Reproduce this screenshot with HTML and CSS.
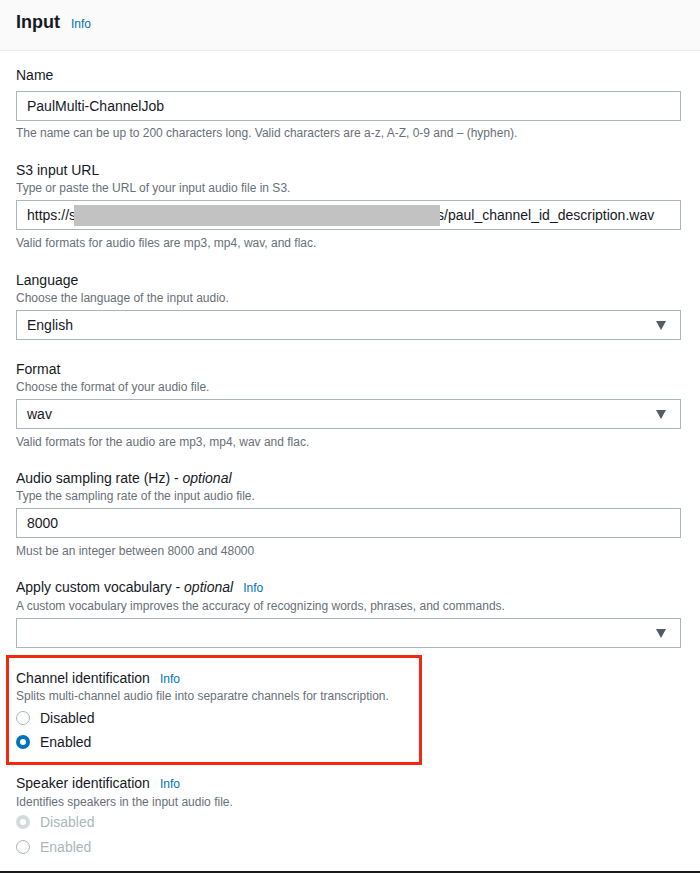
FILE: index.html
```html
<!DOCTYPE html>
<html lang="en">
<head>
<meta charset="utf-8">
<title>Input</title>
<link rel="stylesheet" href="styles.css">
</head>
<body>
<div class="page">
  <header class="header">
    <h1 class="title">Input</h1>
    <a class="info info--header">Info</a>
  </header>
  <main class="form">
    <div class="field field--plain">
      <div class="label">Name</div>
      <div class="control input">PaulMulti-ChannelJob</div>
      <div class="hint hint--first">The name can be up to 200 characters long. Valid characters are a-z, A-Z, 0-9 and – (hyphen).</div>
    </div>

    <div class="field">
      <div class="label">S3 input URL</div>
      <div class="desc">Type or paste the URL of your input audio file in S3.</div>
      <div class="control input">https://s<span class="redact"></span>s/paul_channel_id_description.wav</div>
      <div class="hint">Valid formats for audio files are mp3, mp4, wav, and flac.</div>
    </div>

    <div class="field">
      <div class="label">Language</div>
      <div class="desc">Choose the language of the input audio.</div>
      <div class="control input select"><span>English</span><span class="caret"></span></div>
    </div>

    <div class="field">
      <div class="label">Format</div>
      <div class="desc">Choose the format of your audio file.</div>
      <div class="control input select"><span>wav</span><span class="caret"></span></div>
      <div class="hint">Valid formats for the audio are mp3, mp4, wav and flac.</div>
    </div>

    <div class="field field--audio">
      <div class="label">Audio sampling rate (Hz) - <em>optional</em></div>
      <div class="desc">Type the sampling rate of the input audio file.</div>
      <div class="control input">8000</div>
      <div class="hint">Must be an integer between 8000 and 48000</div>
    </div>

    <div class="field field--vocab">
      <div class="label">Apply custom vocabulary - <em>optional</em><a class="info">Info</a></div>
      <div class="desc">A custom vocabulary improves the accuracy of recognizing words, phrases, and commands.</div>
      <div class="control input select"><span></span><span class="caret"></span></div>
    </div>

    <div class="field field--annotated">
      <div class="label">Channel identification<a class="info">Info</a></div>
      <div class="desc desc--tight">Splits multi-channel audio file into separatre channels for transcription.</div>
      <div class="radios">
        <div class="radio"><span class="dot"></span>Disabled</div>
        <div class="radio"><span class="dot dot--on"></span>Enabled</div>
      </div>
    </div>

    <div class="field field--speaker">
      <div class="label">Speaker identification<a class="info">Info</a></div>
      <div class="desc">Identifies speakers in the input audio file.</div>
      <div class="radios radios--disabled">
        <div class="radio radio--wide"><span class="dot dot--off-on"></span>Disabled</div>
        <div class="radio radio--wide"><span class="dot dot--off"></span>Enabled</div>
      </div>
    </div>
  </main>
</div>
</body>
</html>
```

FILE: styles.css
```css
html, body {
  margin: 0;
  padding: 0;
  background: #ffffff;
}

body {
  font-family: "Liberation Sans", Arial, sans-serif;
  color: #16191f;
}

.page {
  height: 873px;
  box-sizing: border-box;
  border-bottom: 2px solid #1b1b1b;
  overflow: hidden;
}

.header {
  height: 51px;
  box-sizing: border-box;
  padding: 11px 16px 0;
  background: #fafafa;
  border-bottom: 1px solid #eaeded;
  display: flex;
  align-items: baseline;
  gap: 11px;
}

.title {
  margin: 0;
  font-size: 18px;
  line-height: 22px;
  font-weight: 700;
  color: #16191f;
}

.info {
  color: #0073bb;
  font-size: 12px;
  margin-left: 10px;
  font-style: normal;
}

.info--header {
  margin-left: 0;
}

.form {
  padding: 15px 19px 0 16px;
  display: flex;
  flex-direction: column;
  gap: 20px;
}

.field {
  display: flex;
  flex-direction: column;
}

.field--audio {
  margin-top: -1px;
}

.field--vocab {
  margin-top: -1px;
}

.label {
  font-size: 14px;
  line-height: 18px;
  color: #16191f;
}

.label em {
  font-style: italic;
}

.desc {
  font-size: 12px;
  line-height: 18px;
  color: #687078;
}

.desc--tight {
  line-height: 16px;
}

.control {
  margin-top: 3px;
}

.field--plain .control {
  margin-top: 7px;
}

.input {
  height: 30px;
  box-sizing: border-box;
  border: 1px solid #aab7b8;
  padding: 0 10px;
  display: flex;
  align-items: center;
  font-size: 14px;
  color: #16191f;
  white-space: nowrap;
  overflow: hidden;
}

.redact {
  display: inline-block;
  width: 366px;
  height: 21px;
  background: #c2c2c2;
  margin-left: -2px;
  margin-right: -3px;
  position: relative;
  z-index: 1;
}

.select {
  justify-content: space-between;
  padding-right: 14px;
}

.caret {
  width: 0;
  height: 0;
  border-left: 5px solid transparent;
  border-right: 5px solid transparent;
  border-top: 9px solid #545b64;
}

.hint {
  margin-top: 5px;
  font-size: 12px;
  line-height: 16px;
  color: #687078;
}

.hint--first {
  margin-top: 4px;
}

.field--annotated {
  position: relative;
  margin-top: 1px;
}

.field--annotated::after {
  content: "";
  position: absolute;
  left: -10px;
  top: -14px;
  width: 416px;
  height: 110px;
  box-sizing: border-box;
  border: 3px solid #f2280f;
  pointer-events: none;
}

.field--speaker {
  margin-top: 0;
}

.radios {
  display: flex;
  flex-direction: column;
  margin-top: 2px;
}

.radios--disabled {
  margin-top: -2px;
}

.radio {
  height: 24px;
  display: flex;
  align-items: center;
  gap: 10px;
  font-size: 14px;
  color: #16191f;
}

.radio--wide {
  height: 25px;
}

.radios--disabled .radio {
  color: #aab7b8;
}

.dot {
  width: 14px;
  height: 14px;
  box-sizing: border-box;
  border-radius: 50%;
  border: 1px solid #aab7b8;
  background: #ffffff;
}

.dot--on {
  border: 4px solid #0073bb;
  background: #ffffff;
}

.dot--off-on {
  border: 4px solid #d5dbdb;
  background: #ffffff;
}

.dot--off {
  border: 1px solid #aab7b8;
}
```
